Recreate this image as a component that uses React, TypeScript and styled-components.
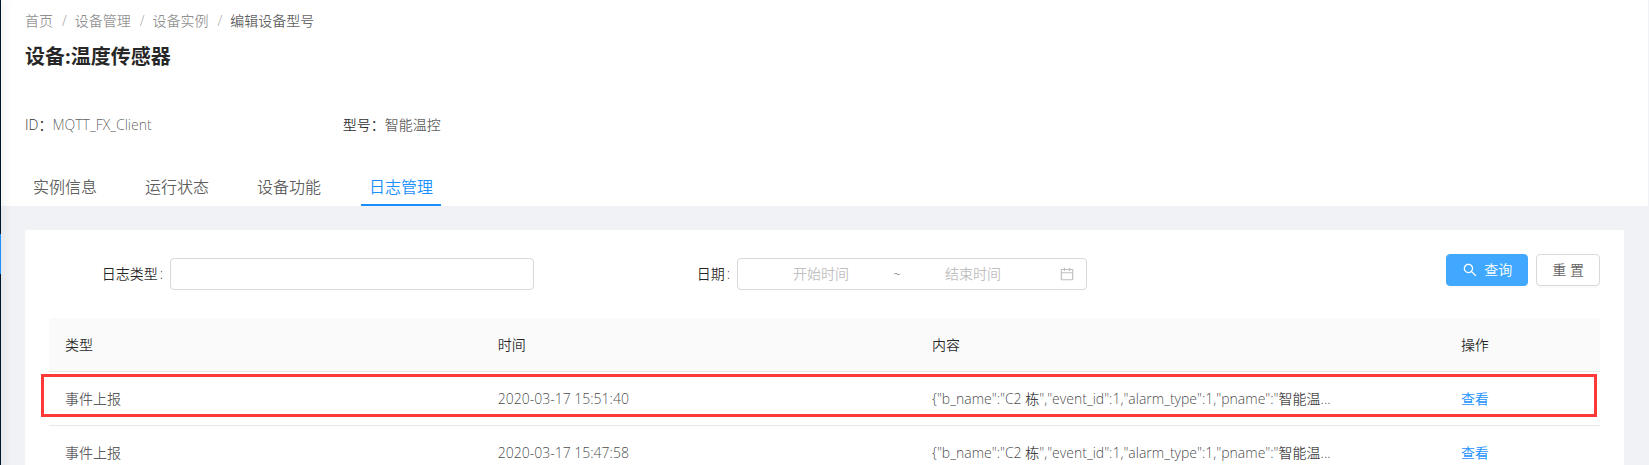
import React from "react";
import styled, { createGlobalStyle } from "styled-components";

const GlobalStyle = createGlobalStyle`
  * { box-sizing: border-box; }
  body {
    margin: 0;
    background: #f0f2f5;
    color: rgba(0, 0, 0, 0.65);
    font-family: "Open Sans", "Noto Sans CJK SC", sans-serif;
    font-size: 14px;
    font-weight: 350;
    line-height: 22px;
  }
  input, button { font: inherit; color: inherit; }
  a { color: inherit; text-decoration: none; }
`;

const Shell = styled.div`
  display: flex;
  min-height: 100vh;
  overflow: hidden;
`;

const Sider = styled.aside`
  position: relative;
  flex: none;
  width: 1px;
  padding-top: 234px;
  background: #001529;
  box-shadow: 2px 0 8px rgba(0, 21, 41, 0.35);
`;

const ActiveMark = styled.div`
  height: 40px;
  background: #1890ff;
`;

const Main = styled.main`
  flex: 1;
  min-width: 0;
`;

const PageHeader = styled.header`
  margin-right: 1px;
  padding: 10px 24px 0;
  background: #fff;
`;

const Breadcrumb = styled.nav`
  display: flex;
  color: rgba(0, 0, 0, 0.45);
`;

const Crumb = styled.a<{ $current?: boolean }>`
  color: ${(p) => (p.$current ? "rgba(0, 0, 0, 0.65)" : "inherit")};
`;

const Slash = styled.span`
  margin: 0 8px 0 9px;
`;

const Title = styled.h1`
  margin: 9px 0 0;
  color: rgba(0, 0, 0, 0.85);
  font-size: 20px;
  font-weight: 700;
  line-height: 32px;
`;

const Facts = styled.dl`
  display: grid;
  grid-template-columns: 318fr 318fr 964fr;
  margin: 41px 0 0;
`;

const Fact = styled.div`
  display: flex;
  dt { color: rgba(0, 0, 0, 0.85); }
  dd { margin: 0; }
`;

const Tabs = styled.div`
  display: flex;
  gap: 32px;
  margin-top: 32px;
`;

const Tab = styled.button<{ $active?: boolean }>`
  height: 38px;
  padding: 2px 8px 0;
  border: 0;
  border-bottom: 2px solid ${(p) => (p.$active ? "#1890ff" : "transparent")};
  background: none;
  color: ${(p) => (p.$active ? "#1890ff" : "inherit")};
  font-size: 16px;
  line-height: 34px;
`;

const Card = styled.section`
  margin: 24px 25px 0 24px;
  padding: 24px;
  border-radius: 2px;
  background: #fff;
`;

const SearchForm = styled.form`
  display: grid;
  grid-template-columns: 121fr 364fr 203fr 350fr 513fr;
  height: 64px;
`;

const Label = styled.label`
  margin-top: 9px;
  padding-right: 7px;
  color: rgba(0, 0, 0, 0.85);
  text-align: right;
  &::after { content: ":"; margin-left: 2px; }
`;

const boxed = `
  height: 32px;
  border: 1px solid #d9d9d9;
  border-radius: 4px;
  background: #fff;
`;

const TextInput = styled.input`
  ${boxed}
  min-width: 0;
  margin-top: 4px;
  padding: 4px 11px;
`;

const RangePicker = styled.div`
  ${boxed}
  display: flex;
  align-items: center;
  min-width: 0;
  margin-top: 4px;
  padding: 0 11px;
  color: rgba(0, 0, 0, 0.65);
`;

const RangeInput = styled.input`
  flex: 1;
  min-width: 0;
  padding: 0;
  border: 0;
  background: none;
  text-align: center;
  &::placeholder { color: #bfbfbf; opacity: 1; }
`;

const CalendarIcon = styled.svg`
  margin-left: 14px;
  color: #bfbfbf;
`;

const Actions = styled.div`
  display: flex;
  justify-content: flex-end;
  gap: 8px;
`;

const Button = styled.button<{ $primary?: boolean }>`
  ${boxed}
  display: flex;
  align-items: center;
  gap: 6px;
  padding: 0 15px;
  box-shadow: 0 2px 0 rgba(0, 0, 0, 0.02);
  ${(p) => p.$primary && "border-color: #40a9ff; background: #40a9ff; color: #fff;"}
`;

const TableArea = styled.div`
  position: relative;
`;

const Table = styled.table`
  width: 100%;
  border-collapse: separate;
  border-spacing: 0;
  table-layout: fixed;
  text-align: left;
  th, td {
    height: 54px;
    padding: 0 16px;
    border-bottom: 1px solid #e8e8e8;
    white-space: nowrap;
  }
  th {
    background: #fafafa;
    color: rgba(0, 0, 0, 0.85);
    font-weight: inherit;
  }
  th:first-child { width: 27.9%; border-top-left-radius: 4px; }
  th:nth-child(2) { width: 28%; }
  th:nth-child(3) { width: 34.1%; }
  th:last-child { border-top-right-radius: 4px; }
  td:nth-child(2), td:nth-child(3) { color: rgba(0, 0, 0, 0.75); }
  a { color: #1890ff; }
`;

const Highlight = styled.div`
  position: absolute;
  top: 56px;
  right: 3px;
  left: -8px;
  height: 43px;
  border: 3px solid #ff3838;
  pointer-events: none;
`;

const tabs = ["实例信息", "运行状态", "设备功能", "日志管理"];
const content = '{"b_name":"C2 栋","event_id":1,"alarm_type":1,"pname":"智能温...';
const logs = [
  { type: "事件上报", time: "2020-03-17 15:51:40", content },
  { type: "事件上报", time: "2020-03-17 15:47:58", content },
];

export default function App() {
  return (
    <Shell>
      <GlobalStyle />
      <Sider><ActiveMark /></Sider>
      <Main>
        <PageHeader>
          <Breadcrumb>
            <Crumb href="#">首页</Crumb><Slash>/</Slash>
            <Crumb href="#">设备管理</Crumb><Slash>/</Slash>
            <Crumb href="#">设备实例</Crumb><Slash>/</Slash>
            <Crumb href="#" $current>编辑设备型号</Crumb>
          </Breadcrumb>
          <Title>设备:温度传感器</Title>
          <Facts>
            <Fact><dt>ID：</dt><dd>MQTT_FX_Client</dd></Fact>
            <Fact><dt>型号：</dt><dd>智能温控</dd></Fact>
          </Facts>
          <Tabs role="tablist">
            {tabs.map((t) => (
              <Tab key={t} role="tab" aria-selected={t === "日志管理"} $active={t === "日志管理"}>{t}</Tab>
            ))}
          </Tabs>
        </PageHeader>
        <Card>
          <SearchForm onSubmit={(e) => e.preventDefault()}>
            <Label htmlFor="type">日志类型</Label>
            <TextInput id="type" />
            <Label htmlFor="start">日期</Label>
            <RangePicker>
              <RangeInput id="start" placeholder="开始时间" />
              <span>~</span>
              <RangeInput aria-label="结束时间" placeholder="结束时间" />
              <CalendarIcon width="16" height="16" viewBox="0 0 1024 1024" fill="currentColor">
                <path d="M880 184H712v-64c0-4.400-3.600-8-8-8h-56c-4.400 0-8 3.600-8 8v64H384v-64c0-4.400-3.600-8-8-8h-56c-4.400 0-8 3.600-8 8v64H144c-17.700 0-32 14.300-32 32v664c0 17.700 14.300 32 32 32h736c17.700 0 32-14.300 32-32V216c0-17.700-14.300-32-32-32zm-40 656H184V460h656v380zM184 392V256h128v48c0 4.400 3.600 8 8 8h56c4.400 0 8-3.600 8-8v-48h256v48c0 4.400 3.600 8 8 8h56c4.400 0 8-3.600 8-8v-48h128v136H184z" />
              </CalendarIcon>
            </RangePicker>
            <Actions>
              <Button type="submit" $primary>
                <svg width="16" height="16" viewBox="0 0 1024 1024" fill="currentColor">
                  <path d="M909.600 854.500L649.900 594.800C690.200 542.700 712 479 712 412c0-80.200-31.300-155.400-87.900-212.100-56.600-56.700-132-87.900-212.100-87.900s-155.500 31.300-212.100 87.900C143.200 256.500 112 331.800 112 412c0 80.100 31.300 155.500 87.900 212.100C256.500 680.800 331.800 712 412 712c67 0 130.600-21.800 182.700-62l259.700 259.600a8.200 8.200 0 0 0 11.600 0l43.600-43.500a8.200 8.200 0 0 0 0-11.600zM570.400 570.400C528 612.700 471.800 636 412 636s-116-23.300-158.400-65.600C211.300 528 188 471.800 188 412s23.300-116.100 65.600-158.400C296 211.300 352.200 188 412 188s116.100 23.200 158.400 65.600S636 352.200 636 412s-23.300 116.100-65.600 158.400z" />
                </svg>
                查询
              </Button>
              <Button type="reset">重 置</Button>
            </Actions>
          </SearchForm>
          <TableArea>
            <Table>
              <thead>
                <tr><th>类型</th><th>时间</th><th>内容</th><th>操作</th></tr>
              </thead>
              <tbody>
                {logs.map((l) => (
                  <tr key={l.time}>
                    <td>{l.type}</td><td>{l.time}</td><td>{l.content}</td><td><a href="#">查看</a></td>
                  </tr>
                ))}
              </tbody>
            </Table>
            <Highlight />
          </TableArea>
        </Card>
      </Main>
    </Shell>
  );
}
